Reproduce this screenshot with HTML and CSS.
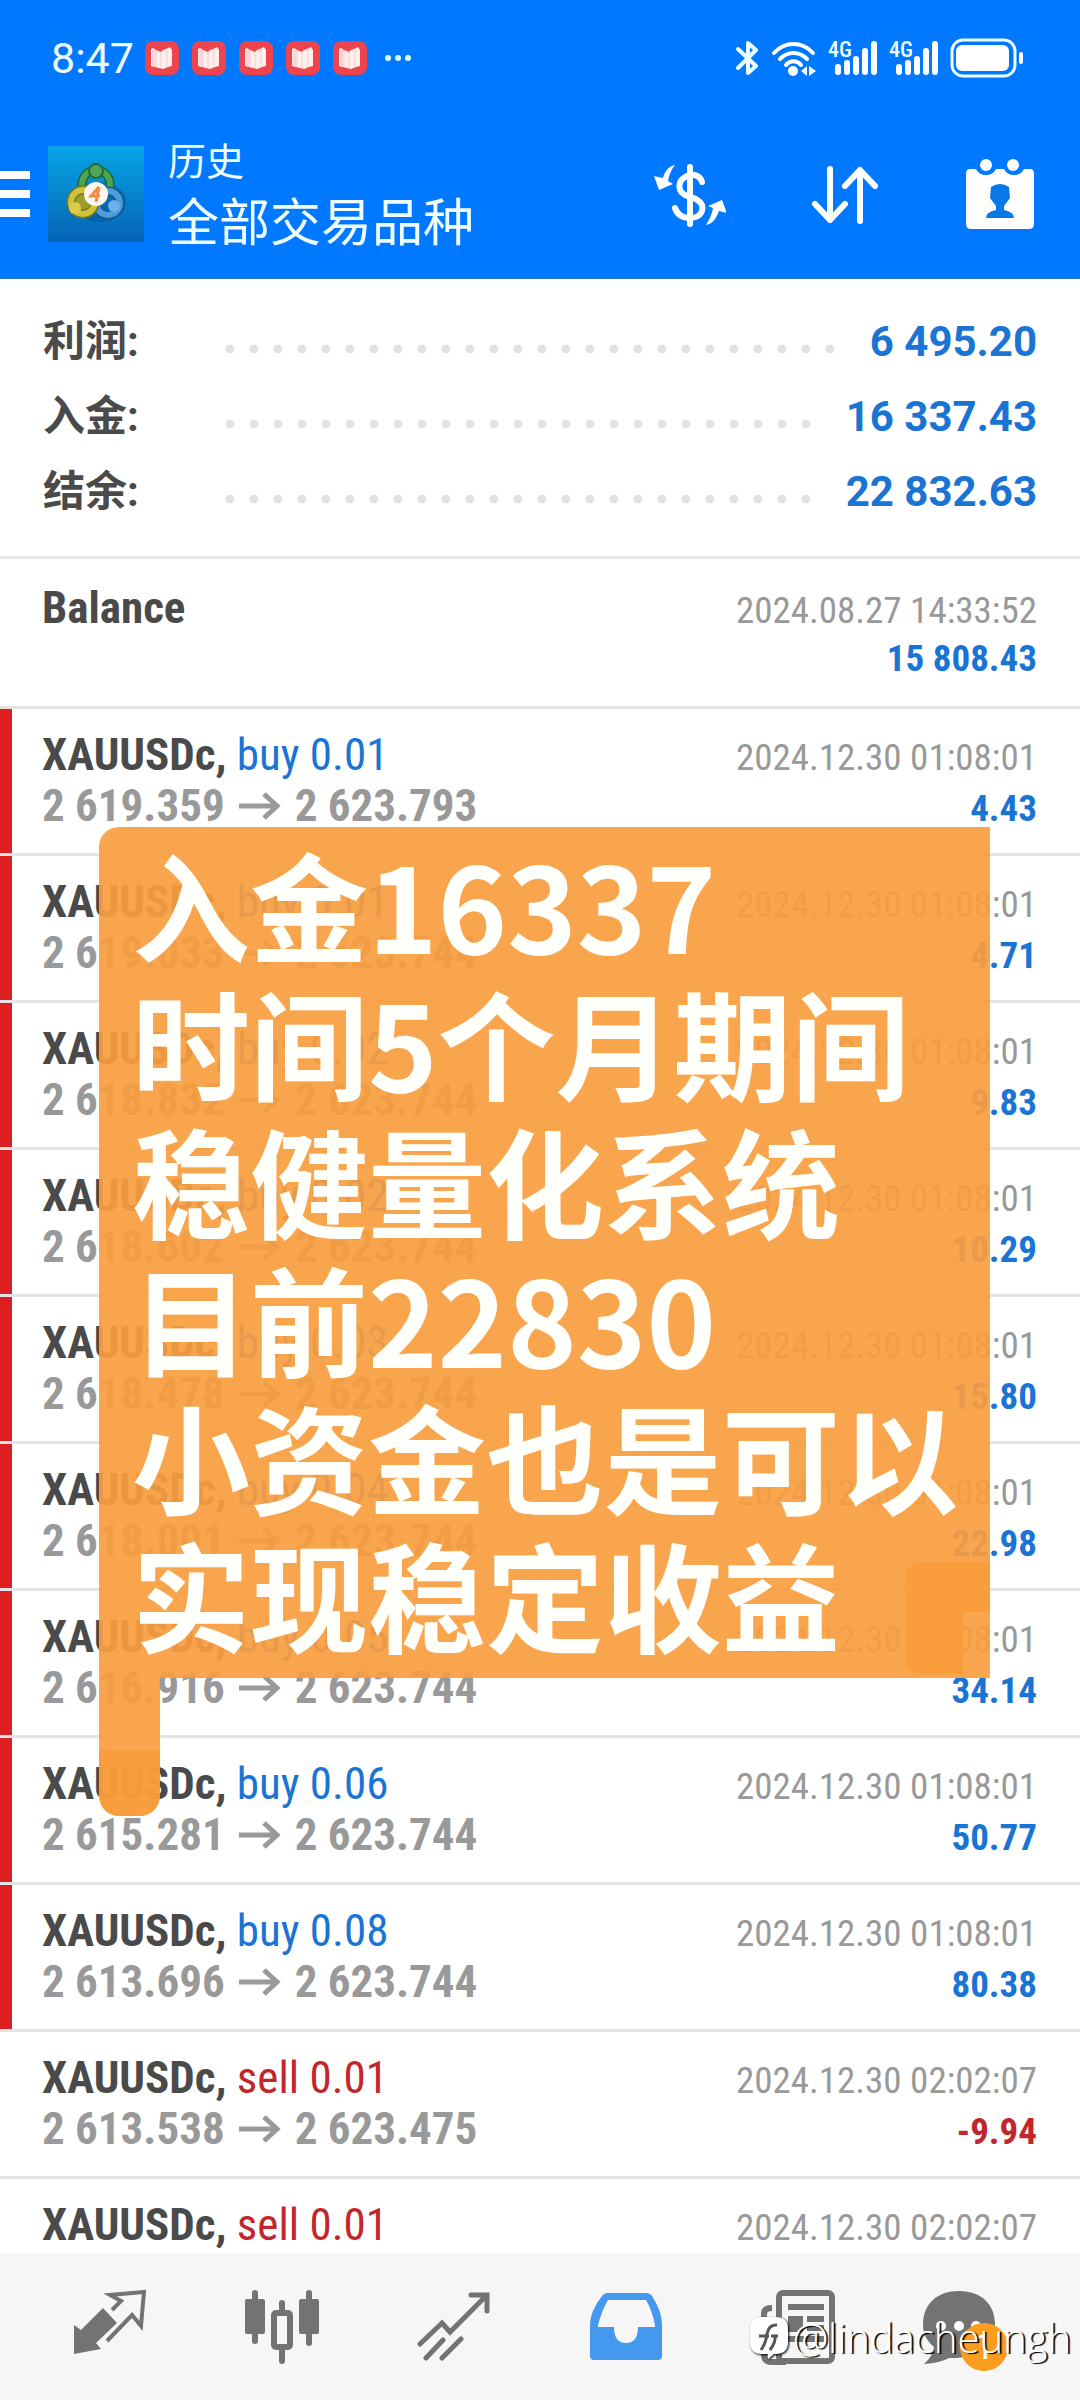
FILE: index.html
```html
<!DOCTYPE html>
<html lang="zh-CN">
<head>
<meta charset="utf-8">
<meta name="viewport" content="width=device-width, initial-scale=1">
<title>历史</title>
<link rel="stylesheet" href="styles.css">
</head>
<body>
<svg class="defs" width="0" height="0" aria-hidden="true">
  <defs>
    <linearGradient id="sky" x1="0" y1="0" x2="0" y2="1"><stop offset="0" stop-color="#08a5e6"/><stop offset="1" stop-color="#0463b4"/></linearGradient>
    <symbol id="book" viewBox="0 0 34 34"><rect width="34" height="34" rx="8" fill="#ee444e"/><path d="M6 8l2 -1l3 2l5 2l2 -2l3 -1l4 -2l2 3v16l-4 1l-5 2l-4 -1l-8 -2z" fill="#fff0ed"/><path d="M7 9l3 0v17l-3 -1z" fill="#ffd4d4"/><path d="M11 9v17M16 11v16M22 9v17" stroke="#fcc9c8"/></symbol>
    <symbol id="signal" viewBox="0 0 50 36"><g stroke="#fff" stroke-width="6" stroke-linecap="round"><path d="M10 27v5M19 23v9M28 19v13M37 11v21M46 4v28"/></g></symbol>
    <symbol id="arrow" viewBox="0 0 42 28"><path d="M0 14h38M25 2l13 12l-13 12" fill="none" stroke="#999" stroke-width="5"/></symbol>
  </defs>
</svg>
<div class="screen">
  <header class="top">
    <div class="status">
      <span class="clock">8:47</span>
      <div class="notices">
        <svg width="34" height="34"><use href="#book"/></svg>
        <svg width="34" height="34"><use href="#book"/></svg>
        <svg width="34" height="34"><use href="#book"/></svg>
        <svg width="34" height="34"><use href="#book"/></svg>
        <svg width="34" height="34"><use href="#book"/></svg>
      </div>
      <svg class="more" width="28" height="8"><circle cx="4" cy="4" r="3" fill="#dff"/><circle cx="14" cy="4" r="3" fill="#dff"/><circle cx="24" cy="4" r="3" fill="#dff"/></svg>
      <div class="indicators">
        <svg width="24" height="36" viewBox="0 0 24 36"><path d="M2 9l18 17l-8 7v-30l8 7l-18 18" fill="none" stroke="#eff" stroke-width="4" stroke-linejoin="round" stroke-linecap="round"/></svg>
        <svg width="46" height="36" viewBox="0 0 46 36"><g fill="none" stroke="#fff" stroke-width="4" stroke-linecap="round"><path d="M3 13c11 -12 28 -12 39 0M9 19c8 -8 19 -8 27 0M15 25c4 -5 11 -5 15 0"/></g><circle cx="22" cy="31" r="5" fill="#fff"/><path d="M36 26v10l-6 -5zM38 26v10l7 -5z" fill="#fff"/></svg>
        <span class="cell"><span class="gen">4G</span><svg width="50" height="36"><use href="#signal"/></svg></span>
        <span class="cell"><span class="gen">4G</span><svg width="50" height="36"><use href="#signal"/></svg></span>
        <svg width="74" height="40" viewBox="0 0 74 40"><rect x="2" y="2" width="63" height="36" rx="11" fill="none" stroke="#eff" stroke-width="3"/><rect x="6" y="7" width="53" height="26" rx="6" fill="#fff"/><rect x="69" y="14" width="4" height="12" rx="2" fill="#fff"/></svg>
      </div>
    </div>
    <div class="appbar">
      <button class="menu" aria-label="菜单"><svg width="30" height="46"><path d="M0 4h30M0 23h30M0 42h30" stroke="#fff" stroke-width="8"/></svg></button>
      <svg class="logo" width="96" height="96" viewBox="0 0 96 96">
        <rect width="96" height="96" fill="url(#sky)"/>
        <ellipse cx="52" cy="56" rx="26" ry="20" fill="#024a86" opacity=".4"/>
        <circle cx="48" cy="38" r="14" fill="none" stroke="#1d6a35" stroke-width="9"/>
        <circle cx="48" cy="38" r="14" fill="none" stroke="#4da551" stroke-width="6"/>
        <circle cx="60" cy="57" r="12" fill="none" stroke="#155694" stroke-width="9"/>
        <circle cx="60" cy="57" r="12" fill="none" stroke="#4d9cdb" stroke-width="6"/>
        <circle cx="35" cy="56" r="12" fill="#9b9d2a" stroke="#75771e" stroke-width="9"/>
        <circle cx="35" cy="56" r="12" fill="none" stroke="#cfc13a" stroke-width="6"/>
        <circle cx="48" cy="25" r="7" fill="#51a45a" stroke="#256f37" stroke-width="2"/>
        <circle cx="27" cy="62" r="6" fill="#dccb4a"/><circle cx="66" cy="60" r="6" fill="#6bb0e8"/>
        <circle cx="48" cy="48" r="12" fill="#fff6ef"/>
        <path d="M51 41l-8 9h9M51 41l-3 15" fill="none" stroke="#f08b45" stroke-width="3"/>
      </svg>
      <div class="titles"><p class="section">历史</p><h1>全部交易品种</h1></div>
      <div class="actions">
        <button aria-label="货币"><svg width="72" height="72" viewBox="0 0 72 72"><g fill="none" stroke="#fff" stroke-width="6" stroke-linecap="round"><path d="M36 9v57"/><path d="M48 24c-2 -8 -12 -9 -17 -5c-8 5 -7 14 0 18c6 3 14 3 17 10c2 8 -4 13 -12 13c-9 0 -13 -4 -15 -10"/></g><path d="M21 7c-7 1 -11 8 -12 13l-9 -2l5 14l14 -6l-5 -3c1 -6 3 -11 7 -16zM52 67c7 -1 11 -8 13 -14l8 2l-5 -13l-14 6l5 2c-1 6 -4 12 -7 17z" fill="#fff"/></svg></button>
        <button aria-label="排序"><svg width="72" height="72" viewBox="0 0 72 72"><path d="M21 11v51M6 46l15 16l15 -16M51 63v-51M36 28l15 -16l15 16" fill="none" stroke="#fff" stroke-width="6" stroke-linecap="round" stroke-linejoin="round"/></svg></button>
        <button aria-label="日期"><svg width="72" height="72" viewBox="0 0 72 72"><path d="M6 11h6q3 6 10 6t10 -6h8q3 6 10 6t10 -6h6q4 0 4 5v50q0 5 -5 5h-58q-5 0 -5 -5v-50q0 -5 4 -5z" fill="#fff"/><circle cx="22" cy="7" r="6" fill="#fff"/><circle cx="49" cy="7" r="6" fill="#fff"/><path d="M27 29q9 -6 18 0l1 11l-6 8v4q10 2 10 8h-28q0 -6 10 -8v-4l-6 -8z" fill="#0878e8"/></svg></button>
      </div>
    </div>
  </header>

  <main>
    <dl class="summary">
      <div><dt>利润:</dt><dd>6 495.20</dd></div>
      <div><dt>入金:</dt><dd>16 337.43</dd></div>
      <div><dt>结余:</dt><dd>22 832.63</dd></div>
    </dl>
    <ul class="deals">
      <li class="deposit"><p><b>Balance</b><time>2024.08.27 14:33:52</time></p><p><span></span><strong>15 808.43</strong></p></li>
      <li class="stop"><p><b>XAUUSDc, <i>buy 0.01</i></b><time>2024.12.30 01:08:01</time></p><p><span class="price">2 619.359<svg width="42" height="28"><use href="#arrow"/></svg>2 623.793</span><strong>4.43</strong></p></li>
      <li class="stop"><p><b>XAUUSDc, <i>buy 0.01</i></b><time>2024.12.30 01:08:01</time></p><p><span class="price">2 619.033<svg width="42" height="28"><use href="#arrow"/></svg>2 623.744</span><strong>4.71</strong></p></li>
      <li class="stop"><p><b>XAUUSDc, <i>buy 0.02</i></b><time>2024.12.30 01:08:01</time></p><p><span class="price">2 618.832<svg width="42" height="28"><use href="#arrow"/></svg>2 623.744</span><strong>9.83</strong></p></li>
      <li class="stop"><p><b>XAUUSDc, <i>buy 0.02</i></b><time>2024.12.30 01:08:01</time></p><p><span class="price">2 618.602<svg width="42" height="28"><use href="#arrow"/></svg>2 623.744</span><strong>10.29</strong></p></li>
      <li class="stop"><p><b>XAUUSDc, <i>buy 0.03</i></b><time>2024.12.30 01:08:01</time></p><p><span class="price">2 618.478<svg width="42" height="28"><use href="#arrow"/></svg>2 623.744</span><strong>15.80</strong></p></li>
      <li class="stop"><p><b>XAUUSDc, <i>buy 0.04</i></b><time>2024.12.30 01:08:01</time></p><p><span class="price">2 618.001<svg width="42" height="28"><use href="#arrow"/></svg>2 623.744</span><strong>22.98</strong></p></li>
      <li class="stop"><p><b>XAUUSDc, <i>buy 0.05</i></b><time>2024.12.30 01:08:01</time></p><p><span class="price">2 616.916<svg width="42" height="28"><use href="#arrow"/></svg>2 623.744</span><strong>34.14</strong></p></li>
      <li class="stop"><p><b>XAUUSDc, <i>buy 0.06</i></b><time>2024.12.30 01:08:01</time></p><p><span class="price">2 615.281<svg width="42" height="28"><use href="#arrow"/></svg>2 623.744</span><strong>50.77</strong></p></li>
      <li class="stop"><p><b>XAUUSDc, <i>buy 0.08</i></b><time>2024.12.30 01:08:01</time></p><p><span class="price">2 613.696<svg width="42" height="28"><use href="#arrow"/></svg>2 623.744</span><strong>80.38</strong></p></li>
      <li class="sell"><p><b>XAUUSDc, <i>sell 0.01</i></b><time>2024.12.30 02:02:07</time></p><p><span class="price">2 613.538<svg width="42" height="28"><use href="#arrow"/></svg>2 623.475</span><strong>-9.94</strong></p></li>
      <li class="sell"><p><b>XAUUSDc, <i>sell 0.01</i></b><time>2024.12.30 02:02:07</time></p></li>
    </ul>
    <aside class="note">
      <p>入金16337</p><p>时间5个月期间</p><p>稳健量化系统</p><p>目前22830</p><p>小资金也是可以</p><p>实现稳定收益</p>
    </aside>
  </main>

  <nav class="tabs">
    <a href="#quotes" aria-label="行情"><svg width="74" height="74" viewBox="0 0 74 74"><path d="M1 36l7 5l22 -22l14 15l-21 20l5 6l-27 5z" fill="#737373"/><path d="M39 21l9 -9l-11 -6l34 -3l-3 34l-9 -11l-25 26" fill="none" stroke="#737373" stroke-width="4"/></svg></a>
    <a href="#chart" aria-label="图表"><svg width="76" height="76" viewBox="0 0 76 76"><g stroke="#737373" stroke-width="6" stroke-linecap="round"><path d="M11 4v48M65 4v50M38 14v58"/></g><rect x="1" y="10" width="20" height="35" rx="2" fill="#737373"/><rect x="55" y="10" width="20" height="35" rx="2" fill="#737373"/><rect x="30" y="24" width="16" height="34" rx="2" fill="#f6f6f6" stroke="#737373" stroke-width="6"/></svg></a>
    <a href="#trade" aria-label="交易"><svg width="74" height="74" viewBox="0 0 74 74"><g fill="none" stroke="#737373" stroke-width="5" stroke-linecap="round"><path d="M3 55l22 -21l8 9l36 -36M54 6h16v16M9 69l17 -18M25 69l19 -19"/></g></svg></a>
    <a href="#history" aria-label="历史"><svg width="74" height="74" viewBox="0 0 74 74"><path fill-rule="evenodd" d="M13 7q2 -3 6 -3h38q4 0 6 3q10 15 10 29v31q0 4 -4 4h-64q-4 0 -4 -4v-31q0 -14 12 -29zM19 11q-6 10 -10 25v2h16q0 16 12 16t12 -16h17v-2q-3 -15 -9 -25z" fill="#4498ee"/></svg></a>
    <a href="#news" aria-label="新闻"><svg width="76" height="76" viewBox="0 0 76 76"><rect x="19" y="4" width="53" height="68" rx="4" fill="#f6f6f6" stroke="#737373" stroke-width="6"/><path d="M12 19q-8 0 -8 6v40q0 8 8 8h14" fill="none" stroke="#737373" stroke-width="6"/><path d="M28 18h36M47 30h17M47 39h17M28 50h36" stroke="#737373" stroke-width="6"/><path d="M28 27h15v16h-15z" fill="#737373"/></svg></a>
    <a href="#messages" aria-label="消息"><span class="chat"><svg width="76" height="76" viewBox="0 0 76 76"><path d="M37 2c23 0 36 14 36 33c0 22 -19 35 -46 34q-9 5 -25 6q9 -8 10 -17c-7 -6 -11 -13 -11 -22c0 -21 14 -34 36 -34z" fill="#737373"/><g fill="#fff"><circle cx="19" cy="37" r="5"/><circle cx="37" cy="37" r="5"/><circle cx="54" cy="37" r="5"/></g></svg><span class="badge">1</span></span></a>
    <p class="credit"><svg width="38" height="44" viewBox="0 0 38 44"><path d="M12 1h14q12 0 12 12v13q0 12 -12 12h-2l-6 5v-5h-6q-12 0 -12 -12v-13q0 -12 12 -12z" fill="#fff"/><path d="M27 9q-8 -1 -10 9q-1 9 -6 16M9 20h10M20 34q6 -8 5 -14M21 20h7" fill="none" stroke="#555" stroke-width="3"/></svg><span>@lindacheungh</span></p>
  </nav>
</div>
</body>
</html>
```
FILE: styles.css
```css
* { box-sizing: border-box; margin: 0; padding: 0; }
body {
  background: #fff;
  color: #4a4a4a;
  font-family: Roboto, "Noto Sans CJK SC", sans-serif;
}
button { border: 0; background: none; display: block; }
svg { display: block; flex: none; }
.defs { position: absolute; }
.screen { height: 100vh; display: flex; flex-direction: column; overflow: hidden; }

.top { background: #0078ff; color: #effdff; padding: 36px 44px 30px 0; border-bottom: 1px solid #2b74bd; }
.status { display: flex; align-items: center; padding: 0 12px 0 51px; height: 44px; }
.clock { font-size: 43px; line-height: 44px; width: 94px; }
.notices { display: flex; gap: 13px; }
.more { margin-left: 17px; }
.indicators { display: flex; align-items: center; gap: 11px; margin-left: auto; }
.cell { position: relative; display: flex; }
.gen { position: absolute; left: 0; top: 0; font: 500 22px/20px "Roboto Condensed", Roboto, sans-serif; }

.appbar { display: flex; align-items: center; margin-top: 60px; height: 108px; }
.menu { width: 48px; }
.titles { margin-left: 24px; padding-top: 6px; }
.section { font-size: 38px; line-height: 48px; }
.titles h1 { margin-top: 6px; font-size: 51px; line-height: 64px; font-weight: 400; }
.actions { display: flex; gap: 83px; margin-left: auto; }

main { position: relative; flex: 1; min-height: 0; overflow: hidden; }
.summary { padding: 25px 43px 27px; border-bottom: 3px solid #e6e6e6; }
.summary div { display: flex; align-items: baseline; height: 75px; line-height: 75px; font-size: 42px; font-weight: 700; }
.summary dt { width: 182px; }
.summary div::before {
  content: "";
  order: 1;
  flex: 1;
  align-self: center;
  height: 8px;
  margin-top: 14px;
  background: radial-gradient(circle at 5px 4px, #e2e2e2 4px, transparent 5px) 0 0 / 24px 8px repeat-x;
}
.summary dd { order: 2; margin-left: 24px; color: #1a74d4; }

.deals { list-style: none; font-family: "Roboto Condensed", "Liberation Sans Narrow", sans-serif; }
.deals li { padding: 20px 43px 22px 42px; border-bottom: 3px solid #e4e4e4; min-height: 147px; }
.deals .deposit { padding-top: 23px; }
.deals .stop { box-shadow: inset 12px 0 #de1f22; }
.deals p { display: flex; justify-content: space-between; align-items: baseline; height: 51px; line-height: 51px; }
.deals b, .price { font-size: 45px; font-weight: 700; }
.deals i { font-style: normal; font-weight: 400; color: #1a74d4; }
.price { display: flex; align-items: center; gap: 14px; color: #999; }
.deals time { font-size: 37px; color: #999; }
.deals strong { font-size: 37px; color: #1a74d4; }
.deals .sell i, .deals .sell strong { color: #c2262b; }

.note {
  position: absolute;
  top: 548px;
  left: 99px;
  right: 90px;
  padding: 7px 33px 16px;
  border-radius: 20px 0 0 0;
  background: rgba(249, 157, 63, 0.92);
  color: #fffffb;
  font: 700 118px/138px "Noto Sans CJK SC", sans-serif;
  white-space: nowrap;
}
.note::before {
  content: "";
  position: absolute;
  top: 100%;
  left: 0;
  width: 61px;
  height: 138px;
  border-radius: 0 0 20px 20px;
  background: linear-gradient(rgba(249, 157, 63, 0.92) 72px, rgba(249, 155, 56, 0.97) 72px);
}
.note::after {
  content: "";
  position: absolute;
  right: 0;
  bottom: 4px;
  width: 85px;
  height: 112px;
  border-radius: 16px 0 0 16px;
  background: linear-gradient(#fa9d3c, #fa9d3c) 0 0 / 100% 50px no-repeat, linear-gradient(#fa9d3c, #fa9d3c) 0 0 / 58px 100% no-repeat;
}

.tabs { position: relative; display: grid; grid-template-columns: repeat(6, 1fr); padding: 0 24px; height: 147px; background: #f6f6f6; }
.tabs a { display: flex; justify-content: center; padding-top: 36px; text-decoration: none; }
.chat { position: relative; width: 96px; height: 76px; }
.badge {
  position: absolute;
  right: 10px;
  bottom: -6px;
  width: 48px;
  height: 48px;
  border-radius: 50%;
  background: #fa9d1e;
  color: #fff;
  font: 36px/48px Roboto, sans-serif;
  text-align: center;
}
.credit {
  position: absolute;
  right: 9px;
  top: 58px;
  display: flex;
  align-items: center;
  gap: 5px;
  color: #fff;
  font: 300 40px/54px "Open Sans", sans-serif;
  text-shadow: 2px 1px 1px #000;
}
.credit svg { filter: drop-shadow(1px 1px 1px #000); }
```
